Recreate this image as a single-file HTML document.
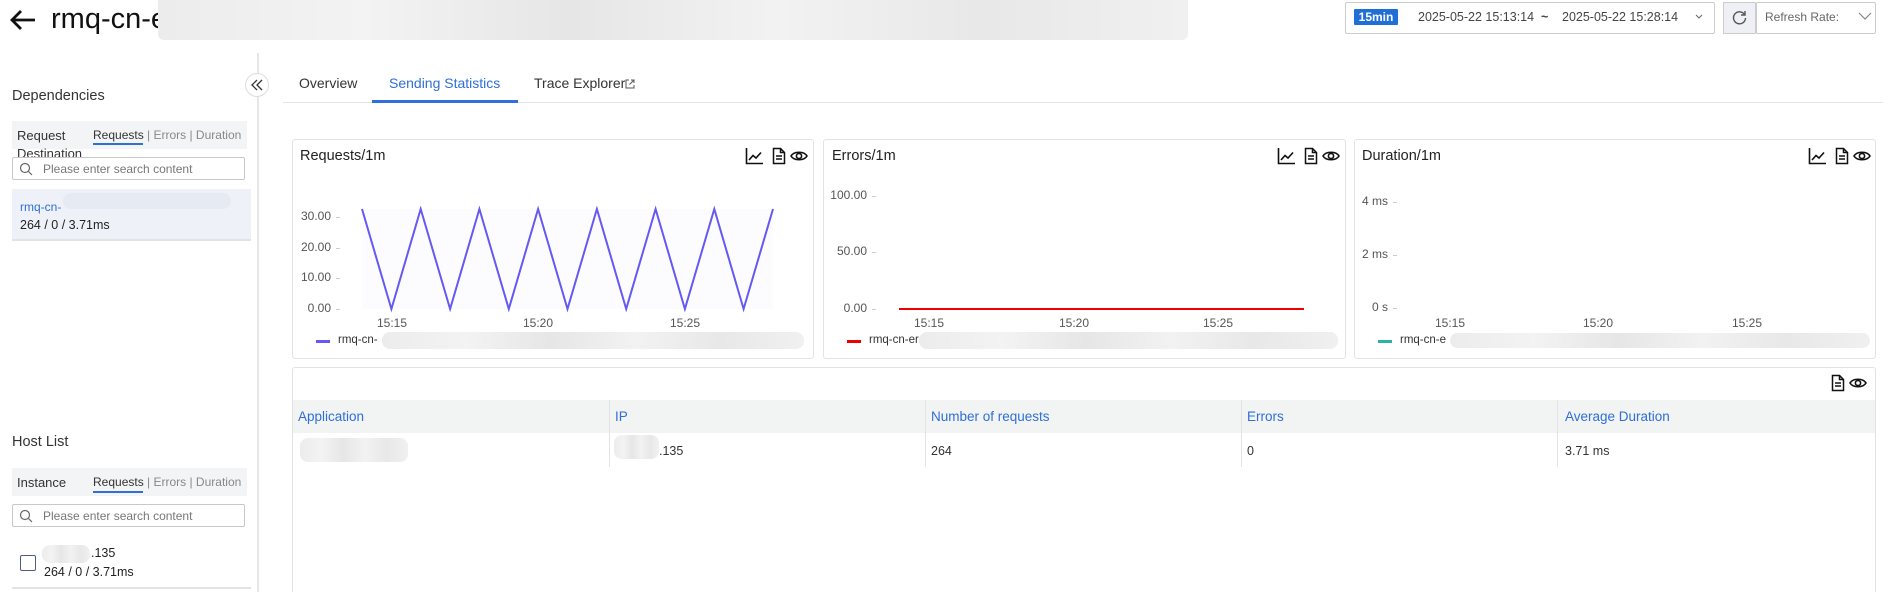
<!DOCTYPE html>
<html><head><meta charset="utf-8"><style>
*{margin:0;padding:0;box-sizing:border-box}
html,body{width:1901px;height:592px;overflow:hidden}
body{background:#fff;font-family:"Liberation Sans",Arial,sans-serif;color:#333;position:relative}
.a{position:absolute;white-space:nowrap}
.blur{position:absolute;background:linear-gradient(90deg,#ececec,#f3f3f3 20%,#e6e6e6 40%,#f2f2f2 60%,#e8e8e8 80%,#f0f0f0);border-radius:8px}
.card{position:absolute;border:1px solid #e3e3e3;border-radius:3px;background:#fff}
.ttl{position:absolute;font-size:14.5px;color:#222}
.yl{position:absolute;font-size:12px;color:#555;text-align:right;width:60px}
.xl{position:absolute;font-size:12px;color:#555;width:40px;text-align:center;margin-left:-20px}
.tk{position:absolute;width:4px;height:1px;background:#ccc}
.search{position:absolute;border:1px solid #c8c8c8;border-radius:2px;height:23px;font-size:12px;color:#777;padding:4px 0 0 30px}
.th{position:absolute;font-size:13.5px;color:#2f6fd9;top:409px}
.td{position:absolute;font-size:12.5px;color:#333;top:444px}
</style></head><body>
<svg class="a" style="left:9px;top:9px" width="28" height="22" viewBox="0 0 28 22"><path d="M26 11H4M12 2L3 11l9 9" fill="none" stroke="#111" stroke-width="2.8"/></svg>
<div class="a" style="left:51px;top:3px;font-size:29px;color:#111">rmq-cn-e</div>
<div class="blur" style="left:158px;top:0;width:1030px;height:40px;border-radius:0 0 6px 6px"></div>

<div class="a" style="left:1345px;top:2px;width:370px;height:32px;border:1px solid #ccc;border-radius:2px"></div>
<div class="a" style="left:1354px;top:9px;width:44px;height:16px;background:#1f6fd6;color:#fff;font-size:12px;font-weight:bold;text-align:center;line-height:16px;border-radius:1px">15min</div>
<div class="a" style="left:1418px;top:10px;font-size:12.5px;color:#444">2025-05-22 15:13:14</div>
<div class="a" style="left:1541px;top:10px;font-size:12.5px;color:#444;font-weight:bold">~</div>
<div class="a" style="left:1562px;top:10px;font-size:12.5px;color:#444">2025-05-22 15:28:14</div>
<svg class="a" style="left:1695px;top:14px" width="8" height="6"><path d="M1 1l3 3 3-3" fill="none" stroke="#666"/></svg>
<div class="a" style="left:1723px;top:2px;width:33px;height:32px;background:#eef0f5;border:1px solid #ccc"></div>
<svg class="a" style="left:1731px;top:9px" width="17" height="17" viewBox="0 0 17 17"><path d="M13.5 5.5A6 6 0 1 0 14.5 9" fill="none" stroke="#555" stroke-width="1.4"/><path d="M14 2v4h-4" fill="none" stroke="#555" stroke-width="1.4"/></svg>
<div class="a" style="left:1756px;top:2px;width:120px;height:32px;border:1px solid #ccc;border-radius:2px"></div>
<div class="a" style="left:1765px;top:10px;font-size:12px;color:#666">Refresh Rate:</div>
<svg class="a" style="left:1858px;top:12px" width="14" height="9"><path d="M1 1l6 6 6-6" fill="none" stroke="#888" stroke-width="1.2"/></svg>

<div class="a" style="left:257px;top:53px;width:2px;height:540px;background:#e6e6e6"></div>
<div class="a" style="left:245px;top:73px;width:24px;height:24px;border:1px solid #ddd;border-radius:50%;background:#fff"></div>
<svg class="a" style="left:250px;top:79px" width="14" height="12"><path d="M7 1L2 6l5 5M12 1L7 6l5 5" fill="none" stroke="#333" stroke-width="1.3"/></svg>

<div class="a" style="left:12px;top:88px;font-size:14.5px;color:#333">Dependencies</div>
<div class="a" style="left:12px;top:121px;width:235px;height:28px;background:#f3f4f5"></div>
<div class="a" style="left:17px;top:127px;font-size:13px;color:#333;line-height:18px;white-space:normal;width:70px">Request Destination</div>
<div class="a" style="left:93px;top:128px;font-size:12px;color:#333">Requests <span style="color:#888">| Errors | Duration</span></div>
<div class="a" style="left:93px;top:143px;width:50px;height:2px;background:#2f6fd9"></div>
<div class="search" style="left:12px;top:157px;width:233px">Please enter search content</div>
<svg class="a" style="left:19px;top:162px" width="14" height="14"><circle cx="6" cy="6" r="4.5" fill="none" stroke="#666" stroke-width="1.2"/><path d="M9.5 9.5l3.5 3.5" stroke="#666" stroke-width="1.2"/></svg>
<div class="a" style="left:12px;top:189px;width:239px;height:52px;background:#eef1f7;border-bottom:2px solid #e3e3e3"></div>
<div class="a" style="left:20px;top:200px;font-size:12px;color:#2f6fd9">rmq-cn-</div>
<div class="blur" style="left:63px;top:193px;width:168px;height:16px;background:#e6eaf2"></div>
<div class="a" style="left:20px;top:218px;font-size:12.5px;color:#222">264 / 0 / 3.71ms</div>

<div class="a" style="left:12px;top:434px;font-size:14.5px;color:#333">Host List</div>
<div class="a" style="left:12px;top:468px;width:235px;height:28px;background:#f3f4f5"></div>
<div class="a" style="left:17px;top:475px;font-size:13px;color:#333">Instance</div>
<div class="a" style="left:93px;top:475px;font-size:12px;color:#333">Requests <span style="color:#888">| Errors | Duration</span></div>
<div class="a" style="left:93px;top:491px;width:50px;height:2px;background:#2f6fd9"></div>
<div class="search" style="left:12px;top:504px;width:233px">Please enter search content</div>
<svg class="a" style="left:19px;top:509px" width="14" height="14"><circle cx="6" cy="6" r="4.5" fill="none" stroke="#666" stroke-width="1.2"/><path d="M9.5 9.5l3.5 3.5" stroke="#666" stroke-width="1.2"/></svg>
<div class="a" style="left:20px;top:555px;width:16px;height:16px;border:1.5px solid #4a5f80;border-radius:2px"></div>
<div class="blur" style="left:42px;top:545px;width:48px;height:18px"></div>
<div class="a" style="left:91px;top:546px;font-size:12.5px;color:#222">.135</div>
<div class="a" style="left:44px;top:565px;font-size:12.5px;color:#222">264 / 0 / 3.71ms</div>
<div class="a" style="left:12px;top:587px;width:239px;height:2px;background:#e3e3e3"></div>

<div class="a" style="left:283px;top:102px;width:1600px;height:1px;background:#e3e3e3"></div>
<div class="a" style="left:299px;top:75px;font-size:14px;color:#333">Overview</div>
<div class="a" style="left:389px;top:75px;font-size:14px;color:#2f6fd9">Sending Statistics</div>
<div class="a" style="left:534px;top:75px;font-size:14px;color:#333">Trace Explorer</div>
<svg class="a" style="left:625px;top:79px" width="10" height="10"><path d="M4 1H1v8h8V6M6 1h3v3M9 1L4.5 5.5" fill="none" stroke="#555"/></svg>
<div class="a" style="left:372px;top:100px;width:146px;height:3px;background:#2f6fd9"></div>

<div class="card" style="left:292px;top:139px;width:522px;height:220px"></div>
<div class="card" style="left:823px;top:139px;width:523px;height:220px"></div>
<div class="card" style="left:1354px;top:139px;width:522px;height:220px"></div>
<div class="ttl" style="left:300px;top:148px">Requests/1m</div>
<div class="ttl" style="left:832px;top:148px">Errors/1m</div>
<div class="ttl" style="left:1362px;top:148px">Duration/1m</div>

<svg class="a" style="left:745px;top:147px" width="64" height="18" viewBox="0 0 64 18">
<path d="M1.5 1v15.5H18M4 13l4-4.5 3 2.5 5-5.5" fill="none" stroke="#111" stroke-width="1.6"/>
<path d="M28.5 1.5h7l4 4v11h-11z M35.5 1.5v4h4 M31 9h6M31 12h6" fill="none" stroke="#111" stroke-width="1.5"/>
<path d="M46 9c3-5 13-5 16 0c-3 5-13 5-16 0z" fill="none" stroke="#111" stroke-width="1.6"/><circle cx="54" cy="9" r="2.6" fill="none" stroke="#111" stroke-width="1.6"/>
</svg>
<svg class="a" style="left:1277px;top:147px" width="64" height="18" viewBox="0 0 64 18">
<path d="M1.5 1v15.5H18M4 13l4-4.5 3 2.5 5-5.5" fill="none" stroke="#111" stroke-width="1.6"/>
<path d="M28.5 1.5h7l4 4v11h-11z M35.5 1.5v4h4 M31 9h6M31 12h6" fill="none" stroke="#111" stroke-width="1.5"/>
<path d="M46 9c3-5 13-5 16 0c-3 5-13 5-16 0z" fill="none" stroke="#111" stroke-width="1.6"/><circle cx="54" cy="9" r="2.6" fill="none" stroke="#111" stroke-width="1.6"/>
</svg>
<svg class="a" style="left:1808px;top:147px" width="64" height="18" viewBox="0 0 64 18">
<path d="M1.5 1v15.5H18M4 13l4-4.5 3 2.5 5-5.5" fill="none" stroke="#111" stroke-width="1.6"/>
<path d="M28.5 1.5h7l4 4v11h-11z M35.5 1.5v4h4 M31 9h6M31 12h6" fill="none" stroke="#111" stroke-width="1.5"/>
<path d="M46 9c3-5 13-5 16 0c-3 5-13 5-16 0z" fill="none" stroke="#111" stroke-width="1.6"/><circle cx="54" cy="9" r="2.6" fill="none" stroke="#111" stroke-width="1.6"/>
</svg>

<div class="yl" style="left:271px;top:209px">30.00</div>
<div class="yl" style="left:271px;top:240px">20.00</div>
<div class="yl" style="left:271px;top:270px">10.00</div>
<div class="yl" style="left:271px;top:301px">0.00</div>
<div class="tk" style="left:336px;top:217px"></div><div class="tk" style="left:336px;top:248px"></div><div class="tk" style="left:336px;top:278px"></div><div class="tk" style="left:336px;top:309px"></div>
<svg class="a" style="left:0;top:0" width="820" height="330">
<rect x="362" y="209" width="411" height="100" fill="#fcfcfe"/>
<polyline points="362,209 391.4,309 420.7,209 450.1,309 479.4,209 508.8,309 538.1,209 567.5,309 596.9,209 626.2,309 655.6,209 684.9,309 714.3,209 743.6,309 773,209" fill="none" stroke="#6558f5" stroke-width="2"/>
</svg>
<div class="xl" style="left:392px;top:316px">15:15</div>
<div class="xl" style="left:538px;top:316px">15:20</div>
<div class="xl" style="left:685px;top:316px">15:25</div>
<div class="a" style="left:316px;top:340px;width:14px;height:3px;background:#6558f5"></div>
<div class="a" style="left:338px;top:334px;font-size:11.5px;color:#333">rmq-cn-</div>
<div class="blur" style="left:382px;top:332px;width:422px;height:17px"></div>

<div class="yl" style="left:807px;top:188px">100.00</div>
<div class="yl" style="left:807px;top:244px">50.00</div>
<div class="yl" style="left:807px;top:301px">0.00</div>
<div class="tk" style="left:872px;top:196px"></div><div class="tk" style="left:872px;top:252px"></div><div class="tk" style="left:872px;top:309px"></div>
<div class="a" style="left:899px;top:308px;width:405px;height:2px;background:#e00"></div>
<div class="xl" style="left:929px;top:316px">15:15</div>
<div class="xl" style="left:1074px;top:316px">15:20</div>
<div class="xl" style="left:1218px;top:316px">15:25</div>
<div class="a" style="left:847px;top:340px;width:14px;height:3px;background:#e00"></div>
<div class="a" style="left:869px;top:334px;font-size:11.5px;color:#333">rmq-cn-er</div>
<div class="blur" style="left:919px;top:332px;width:419px;height:17px"></div>

<div class="yl" style="left:1328px;top:194px">4 ms</div>
<div class="yl" style="left:1328px;top:247px">2 ms</div>
<div class="yl" style="left:1328px;top:300px">0 s</div>
<div class="tk" style="left:1393px;top:202px"></div><div class="tk" style="left:1393px;top:255px"></div><div class="tk" style="left:1393px;top:308px"></div>
<div class="xl" style="left:1450px;top:316px">15:15</div>
<div class="xl" style="left:1598px;top:316px">15:20</div>
<div class="xl" style="left:1747px;top:316px">15:25</div>
<div class="a" style="left:1378px;top:340px;width:14px;height:3px;background:#2fb2a4"></div>
<div class="a" style="left:1400px;top:334px;font-size:11.5px;color:#333">rmq-cn-e</div>
<div class="blur" style="left:1450px;top:333px;width:420px;height:15px"></div>

<div class="card" style="left:292px;top:367px;width:1584px;height:230px"></div>
<svg class="a" style="left:1830px;top:374px" width="40" height="18" viewBox="26 0 40 18">
<path d="M28.5 1.5h7l4 4v11h-11z M35.5 1.5v4h4 M31 9h6M31 12h6" fill="none" stroke="#111" stroke-width="1.5"/>
<path d="M46 9c3-5 13-5 16 0c-3 5-13 5-16 0z" fill="none" stroke="#111" stroke-width="1.6"/><circle cx="54" cy="9" r="2.6" fill="none" stroke="#111" stroke-width="1.6"/>
</svg>
<div class="a" style="left:293px;top:400px;width:1582px;height:33px;background:#f2f3f3"></div>
<div class="a" style="left:609px;top:400px;width:1px;height:67px;background:#e3e3e3"></div>
<div class="a" style="left:925px;top:400px;width:1px;height:67px;background:#e3e3e3"></div>
<div class="a" style="left:1241px;top:400px;width:1px;height:67px;background:#e3e3e3"></div>
<div class="a" style="left:1557px;top:400px;width:1px;height:67px;background:#e3e3e3"></div>
<div class="th" style="left:298px">Application</div>
<div class="th" style="left:615px">IP</div>
<div class="th" style="left:931px">Number of requests</div>
<div class="th" style="left:1247px">Errors</div>
<div class="th" style="left:1565px">Average Duration</div>
<div class="blur" style="left:300px;top:438px;width:108px;height:24px"></div>
<div class="blur" style="left:614px;top:435px;width:45px;height:24px"></div>
<div class="td" style="left:659px">.135</div>
<div class="td" style="left:931px">264</div>
<div class="td" style="left:1247px">0</div>
<div class="td" style="left:1565px">3.71 ms</div>
</body></html>
